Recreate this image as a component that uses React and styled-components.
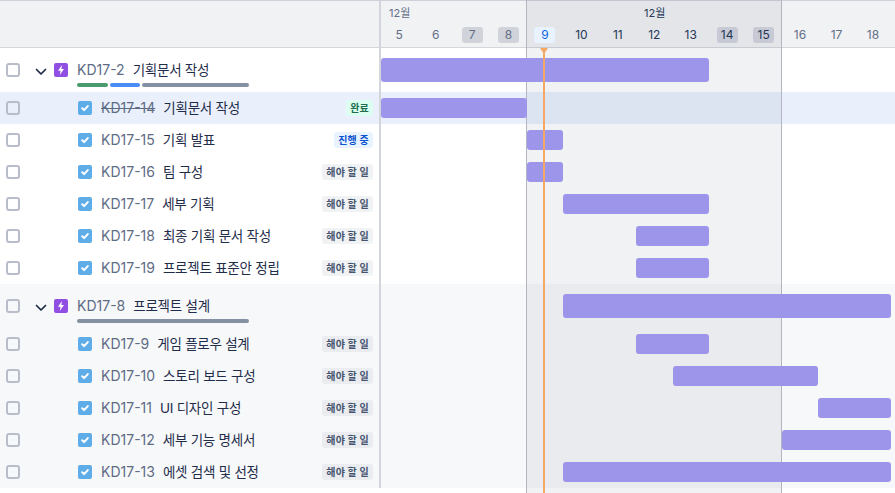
import React from "react"
import styled, { createGlobalStyle } from "styled-components"

const days = [5, 6, 7, 8, 9, 10, 11, 12, 13, 14, 15, 16, 17, 18]

const issues = [
  { key: "KD17-2", title: "기획문서 작성", epic: true, from: 1, to: 10, progress: [31, 30, 107] },
  { key: "KD17-14", title: "기획문서 작성", status: "done", from: 1, to: 5, selected: true, done: true },
  { key: "KD17-15", title: "기획 발표", status: "doing", from: 5, to: 6 },
  { key: "KD17-16", title: "팀 구성", status: "todo", from: 5, to: 6 },
  { key: "KD17-17", title: "세부 기획", status: "todo", from: 6, to: 10 },
  { key: "KD17-18", title: "최종 기획 문서 작성", status: "todo", from: 8, to: 10 },
  { key: "KD17-19", title: "프로젝트 표준안 정립", status: "todo", from: 8, to: 10 },
  { key: "KD17-8", title: "프로젝트 설계", epic: true, from: 6, to: 15, progress: [172], shaded: true },
  { key: "KD17-9", title: "게임 플로우 설계", status: "todo", from: 8, to: 10, shaded: true },
  { key: "KD17-10", title: "스토리 보드 구성", status: "todo", from: 9, to: 13, shaded: true },
  { key: "KD17-11", title: "UI 디자인 구성", status: "todo", from: 13, to: 15, shaded: true },
  { key: "KD17-12", title: "세부 기능 명세서", status: "todo", from: 12, to: 15, shaded: true },
  { key: "KD17-13", title: "에셋 검색 및 선정", status: "todo", from: 6, to: 15, shaded: true },
]

const statusText = { done: "완료", doing: "진행 중", todo: "해야 할 일" }
const statusColors = {
  done: ["#dcfff1", "#216e4e"],
  doing: ["#e9f2ff", "#0c55cf"],
  todo: ["#f1f2f4", "#44546f"],
}
const progressColors = ["#4c9a6f", "#4c8cf7", "#8590a2"]

const App = () => {
  return (
    <Page>
      <GlobalStyle />
      <HeaderRow>
        <LeftHead />
        <Calendar>
          <Month $col={1}>12월</Month>
          <Month $col={8} $strong>12월</Month>
          {days.map((d) => (
            <Day key={d} $row={2}>
              <DayChip $kind={d === 9 ? "today" : [7, 8, 14, 15].includes(d) ? "weekend" : ""} $inRange={d >= 9 && d <= 15}>
                {d}
              </DayChip>
            </Day>
          ))}
        </Calendar>
      </HeaderRow>

      {issues.map((item) => (
        <Row key={item.key} $epic={item.epic} $selected={item.selected} $shaded={item.shaded}>
          <LeftCell $epic={item.epic}>
            <RowCheck />
            {item.epic ? (
              <>
                <Chevron viewBox="0 0 12 8">
                  <path d="M1.5 1.5L6 6l4.5-4.5" fill="none" stroke="#1d2b45" strokeWidth="1.7" strokeLinecap="round" strokeLinejoin="round" />
                </Chevron>
                <IconBox viewBox="0 0 14 14">
                  <rect width="14" height="14" rx="2" fill="#904ee2" />
                  <path d="M8 2L4 7.8h2.6L5.8 12l4.2-6H7.4z" fill="#fff" />
                </IconBox>
              </>
            ) : (
              <TaskIcon viewBox="0 0 14 14">
                <rect width="14" height="14" rx="2" fill="#5fade8" />
                <path d="M4.2 7.3l1.9 1.8 3.7-4" fill="none" stroke="#fff" strokeWidth="2" strokeLinecap="round" strokeLinejoin="round" />
              </TaskIcon>
            )}
            <TextBlock>
              <TitleLine>
                <Key $done={item.done}>{item.key}</Key>
                <Title>{item.title}</Title>
              </TitleLine>
              {item.progress && (
                <Progress>
                  {item.progress.map((w, i) => (
                    <ProgressPart
                      key={i}
                      style={{ width: w }}
                      $color={item.progress.length === 1 ? progressColors[2] : progressColors[i]}
                    />
                  ))}
                </Progress>
              )}
            </TextBlock>
            {item.status && (
              <Lozenge $status={item.status} $shaded={item.shaded}>
                {statusText[item.status]}
              </Lozenge>
            )}
          </LeftCell>
          <Track>
            <Bar $from={item.from} $to={item.to} $epic={item.epic} />
          </Track>
        </Row>
      ))}

      <RangeOverlay />
      <TodayLine />
    </Page>
  )
}

export default App

const GlobalStyle = createGlobalStyle`
  html, body {
    margin: 0;
    background: #fff;
  }
  body {
    font-family: Inter, "Noto Sans CJK KR", sans-serif;
  }
`

const Page = styled.div`
  position: relative;
  width: 895px;
  height: 493px;
  overflow: hidden;
  --divider: #d3d5dd;
`

const HeaderRow = styled.div`
  display: flex;
  box-sizing: border-box;
  height: 48px;
  background: #f1f2f4;
  border-top: 1px solid #cfd1da;
  border-bottom: 1px solid #d5d6dc;
`

const LeftHead = styled.div`
  width: 379px;
  flex: none;
  border-right: 2px solid var(--divider);
`

const Calendar = styled.div`
  display: grid;
  grid-template-columns: repeat(14, 36.45px);
  grid-template-rows: 24px 22px;
`

const Month = styled.div`
  grid-column: ${(p) => p.$col} / span 4;
  grid-row: 1;
  padding: 5px 0 0 8px;
  font-size: 11px;
  line-height: 15px;
  color: ${(p) => (p.$strong ? "#243757" : "#626f86")};
  position: relative;
  z-index: 3;
`

const Day = styled.div`
  grid-row: ${(p) => p.$row};
  display: flex;
  justify-content: center;
  align-items: flex-start;
`

const DayChip = styled.div`
  width: 21px;
  height: 16px;
  margin-top: 2px;
  border-radius: 3px;
  text-align: center;
  font-size: 12px;
  line-height: 16px;
  position: relative;
  z-index: 3;
  color: ${(p) => (p.$kind === "today" ? "#0c66e4" : p.$inRange ? "#243757" : "#626f86")};
  background: ${(p) =>
    p.$kind === "today"
      ? "#e9f2ff"
      : p.$kind === "weekend"
        ? p.$inRange
          ? "#c7cad5"
          : "#d0d3da"
        : "transparent"};
`

const Row = styled.div`
  display: flex;
  height: ${(p) => (p.$epic ? "44px" : "32px")};
  background: ${(p) => (p.$selected ? "#e9f0fc" : p.$shaded ? "#f7f8fa" : "#fff")};
`

const LeftCell = styled.div`
  width: 379px;
  flex: none;
  box-sizing: content-box;
  display: flex;
  align-items: ${(p) => (p.$epic ? "flex-start" : "center")};
  padding-top: ${(p) => (p.$epic ? "15px" : "0")};
  height: ${(p) => (p.$epic ? "29px" : "32px")};
  border-right: 2px solid var(--divider);
`

const RowCheck = styled.span`
  width: 14px;
  height: 14px;
  margin-left: 6px;
  flex: none;
  box-sizing: border-box;
  border: 2px solid #b9bdca;
  border-radius: 3px;
`

const Chevron = styled.svg`
  width: 12px;
  height: 8px;
  margin: 5px 0 0 15px;
  flex: none;
`

const IconBox = styled.svg`
  width: 14px;
  height: 14px;
  margin-left: 7px;
  flex: none;
`

const TaskIcon = styled.svg`
  width: 14px;
  height: 14px;
  margin-left: 58px;
  flex: none;
`

const TextBlock = styled.div`
  margin-left: 9px;
  flex: 1;
  min-width: 0;
`

const TitleLine = styled.div`
  display: flex;
  gap: 8px;
  font-size: 14px;
  line-height: 16px;
  margin-top: -1px;
  white-space: nowrap;
`

const Key = styled.span`
  color: #5e6c84;
  text-decoration: ${(p) => (p.$done ? "line-through" : "none")};
`

const Title = styled.span`
  color: #1f2d4a;
  font-size: 13.5px;
  letter-spacing: -0.25px;
`

const Progress = styled.div`
  display: flex;
  gap: 2px;
  margin-top: 5px;
`

const ProgressPart = styled.span`
  height: 4px;
  background: ${(p) => p.$color};
  border-radius: 2px;
`

const Lozenge = styled.span`
  flex: none;
  height: 16px;
  margin-right: 6px;
  padding: 0 4px;
  border-radius: 3px;
  font-size: 10px;
  line-height: 16px;
  font-weight: 700;
  letter-spacing: 0.2px;
  color: ${(p) => statusColors[p.$status][1]};
  background: ${(p) => (p.$shaded ? "#ebecf0" : statusColors[p.$status][0])};
`

const Track = styled.div`
  display: grid;
  grid-template-columns: repeat(14, 36.45px);
  align-items: center;
  min-width: 0;
`

const Bar = styled.div`
  grid-column: ${(p) => p.$from} / ${(p) => p.$to};
  height: ${(p) => (p.$epic ? "24px" : "20px")};
  background: #9d95ea;
  border-radius: 3px;
  position: relative;
  z-index: 2;
`

const RangeOverlay = styled.div`
  position: absolute;
  top: 0;
  bottom: 0;
  left: 526px;
  width: 254px;
  background: rgba(9, 30, 66, 0.06);
  border-left: 1px solid #b3b5c3;
  border-right: 1px solid #b3b5c3;
  z-index: 1;
`

const TodayLine = styled.div`
  position: absolute;
  top: 48px;
  bottom: 0;
  left: 543px;
  width: 2px;
  background: #f5a765;
  z-index: 4;
  &::before {
    content: "";
    position: absolute;
    top: 0;
    left: -3px;
    border-left: 4px solid transparent;
    border-right: 4px solid transparent;
    border-top: 6px solid #f5a765;
  }
`
